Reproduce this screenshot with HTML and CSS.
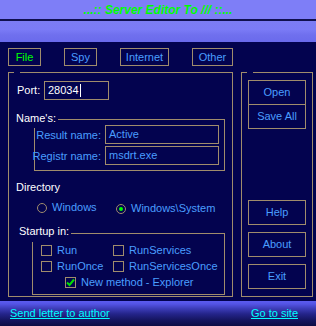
FILE: index.html
```html
<!DOCTYPE html>
<html lang="en">
  <head>
    <meta charset="UTF-8" />
    <meta name="viewport" content="width=device-width, initial-scale=1.0" />
    <title>Server Editor</title>
    <link rel="stylesheet" href="styles.css">
  </head>
  <body>
    <div class="title-bar"><span class="title">...:: Server Editor To /// ::...</span></div>
    <div class="title-rule"></div>
    <div class="title-band"></div>

    <nav class="tabs">
      <span class="tab tab-file active">File</span>
      <span class="tab tab-spy">Spy</span>
      <span class="tab tab-internet">Internet</span>
      <span class="tab tab-other">Other</span>
    </nav>

    <div class="main">
      <section class="panel panel-left">
        <div class="port-row">
          <span class="label-white port-label">Port:</span>
          <div class="field port-field">28034<span class="caret"></span></div>
        </div>

        <div class="group names">
          <span class="group-caption">Name's:</span>
          <div class="name-grid">
            <span class="label-blue name-label">Result name:</span>
            <div class="field">Active</div>
            <span class="label-blue name-label">Registr name:</span>
            <div class="field">msdrt.exe</div>
          </div>
        </div>

        <div class="label-white dir-label">Directory</div>
        <div class="radios">
          <span class="radio-item first"><span class="radio"></span>Windows</span>
          <span class="radio-item second"><span class="radio checked"></span>Windows\System</span>
        </div>

        <div class="group startup">
          <span class="group-caption">Startup in:</span>
          <div class="check-grid">
            <span class="check-item"><span class="check"></span>Run</span>
            <span class="check-item"><span class="check"></span>RunServices</span>
            <span class="check-item"><span class="check"></span>RunOnce</span>
            <span class="check-item"><span class="check"></span>RunServicesOnce</span>
            <span class="check-item wide">
              <span class="check">
                <svg width="9" height="9" viewBox="0 0 9 9"><path d="M1 4.5 L3.5 7 L8 1.5" fill="none" stroke="#00e000" stroke-width="2"/></svg>
              </span>New method - Explorer
            </span>
          </div>
        </div>
      </section>

      <section class="panel panel-right">
        <div class="btn-group">
          <div class="btn">Open</div>
          <div class="btn joined">Save All</div>
        </div>
        <div class="btn-group bottom">
          <div class="btn">Help</div>
          <div class="btn">About</div>
          <div class="btn">Exit</div>
        </div>
      </section>
    </div>

    <footer class="footer">
      <a class="link">Send letter to author</a>
      <a class="link">Go to site</a>
    </footer>
  </body>
</html>
```

FILE: styles.css
```css
body {
  font-family: "Liberation Sans", Arial, sans-serif;
  font-size: 11px;
  line-height: 13px;
  background-color: #03034f;
  margin: 0;
  padding: 0;
  width: 316px;
  height: 326px;
  overflow: hidden;
}

.title-bar {
  height: 19px;
  background-color: #7e7ef7;
  display: flex;
  align-items: center;
  justify-content: center;
}

.title {
  color: #00ff00;
  font-weight: bold;
  font-style: italic;
  font-size: 12px;
  padding-top: 2px;
}

.title-rule {
  height: 2px;
  background-color: #10104f;
}

.title-band {
  height: 21px;
  background: linear-gradient(to bottom, #7c7cf4 0, #7b7bf6 40%, #7070ee 65%, #6a6aec 100%);
}

.tabs {
  display: flex;
  gap: 23px;
  padding: 6px 0 0 8px;
}

.tab {
  box-sizing: border-box;
  height: 18px;
  border: 1px solid #a08c6c;
  color: #4a9eff;
  display: flex;
  align-items: center;
  justify-content: center;
}

.tab.active {
  color: #00ff00;
}

.tab-file,
.tab-spy {
  width: 33px;
}

.tab-internet {
  width: 49px;
}

.tab-other {
  width: 41px;
}

.main {
  display: flex;
  gap: 8px;
  margin-top: 6px;
  padding-left: 8px;
}

.panel {
  position: relative;
  box-sizing: border-box;
  height: 225px;
  border: 1px solid #a08c6c;
}

.panel::before {
  content: "";
  position: absolute;
  top: -1px;
  left: 5px;
  width: 6px;
  height: 1px;
  background-color: #03034f;
}

.panel-left {
  width: 225px;
}

.panel-right {
  width: 72px;
  display: flex;
  flex-direction: column;
  padding: 7px 6px 7px 6px;
}

.label-white {
  color: #ffffff;
}

.label-blue {
  color: #4a9eff;
}

.field {
  box-sizing: border-box;
  height: 19px;
  border: 1px solid #a08c6c;
  color: #4a9eff;
  padding-left: 3px;
  display: flex;
  align-items: center;
}

.port-row {
  display: flex;
  align-items: center;
  margin-top: 8px;
  padding-left: 8px;
}

.port-label {
  width: 27px;
}

.port-field {
  width: 65px;
  color: #ffffff;
}

.caret {
  width: 1px;
  height: 13px;
  background-color: #ffffff;
  margin-left: 1px;
}

.group {
  position: relative;
  box-sizing: border-box;
  border: 1px solid #a08c6c;
}

.group-caption {
  position: absolute;
  background-color: #03034f;
  color: #ffffff;
  padding-right: 2px;
}

.names {
  margin: 19px 0 0 25px;
  width: 191px;
  height: 52px;
}

.names .group-caption {
  left: -19px;
  top: -8px;
  height: 16px;
}

.name-grid {
  display: grid;
  grid-template-columns: 66px 114px;
  column-gap: 4px;
  row-gap: 2px;
  padding: 5px 5px 5px 0;
  align-items: center;
}

.name-label {
  display: flex;
  justify-content: flex-end;
  white-space: nowrap;
  padding-top: 2px;
}

.dir-label {
  margin: 10px 0 0 7px;
}

.radios {
  display: flex;
  margin: 6px 0 0 28px;
  color: #4a9eff;
}

.radio-item {
  display: flex;
  align-items: center;
  gap: 5px;
}

.radio-item.first {
  width: 79px;
}

.radio-item.second {
  margin-top: 2px;
}

.radio {
  box-sizing: border-box;
  width: 10px;
  height: 10px;
  border: 1px solid #a08c6c;
  border-radius: 50%;
  display: flex;
  align-items: center;
  justify-content: center;
}

.radio.checked::after {
  content: "";
  width: 4px;
  height: 4px;
  border-radius: 50%;
  background-color: #00ff00;
}

.startup {
  margin: 18px 0 0 23px;
  width: 193px;
  height: 62px;
}

.startup .group-caption {
  left: -14px;
  top: -9px;
  height: 17px;
}

.check-grid {
  display: grid;
  grid-template-columns: 72px auto;
  grid-auto-rows: 11px;
  row-gap: 5px;
  padding: 11px 0 6px 8px;
}

.check-item {
  display: flex;
  align-items: center;
  gap: 5px;
  color: #4a9eff;
  white-space: nowrap;
}

.check-item.wide {
  grid-column: 1 / 3;
  margin-left: 24px;
}

.check {
  box-sizing: border-box;
  width: 11px;
  height: 11px;
  border: 1px solid #a08c6c;
  display: flex;
  align-items: center;
  justify-content: center;
}

.btn-group {
  display: flex;
  flex-direction: column;
  gap: 7px;
}

.btn-group:first-child {
  gap: 0;
}

.btn-group.bottom {
  margin-top: auto;
}

.btn {
  box-sizing: border-box;
  width: 58px;
  height: 25px;
  border: 1px solid #a08c6c;
  color: #4a9eff;
  display: flex;
  align-items: center;
  justify-content: center;
}

.btn.joined {
  border-top: none;
  height: 24px;
}

.footer {
  margin-top: 4px;
  height: 25px;
  display: flex;
  align-items: center;
  justify-content: space-between;
  padding: 0 18px 0 10px;
  background: linear-gradient(to bottom, #5c5cf0 0, #5454e4 3px, #3a3ab4 8px, #24248a 13px, #151560 19px, #0c0c44 25px);
}

.link {
  color: #00ffff;
  text-decoration: underline;
}
```
